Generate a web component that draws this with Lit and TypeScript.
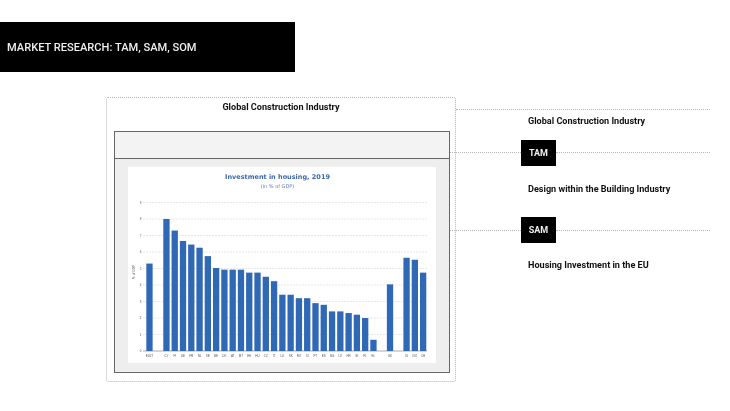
import { LitElement, html, css, svg } from "lit";
import { customElement } from "lit/decorators.js";

const VALUES: [string, number, number][] = [
  ["EU27", 5.3, -2.05], ["CY", 8, 0], ["FI", 7.3, 1], ["DE", 6.67, 2], ["FR", 6.45, 3], ["NL", 6.26, 4],
  ["SE", 5.75, 5], ["BE", 5.03, 6], ["DK", 4.93, 7], ["AT", 4.93, 8], ["MT", 4.93, 9], ["EE", 4.75, 10],
  ["HU", 4.75, 11], ["CZ", 4.5, 12], ["IT", 4.23, 13], ["LU", 3.41, 14], ["SK", 3.41, 15], ["RO", 3.2, 16],
  ["SI", 3.2, 17], ["PT", 2.9, 18], ["ES", 2.8, 19], ["BG", 2.4, 20], ["LV", 2.4, 21], ["HR", 2.3, 22],
  ["IE", 2.2, 23], ["PL", 2.0, 24], ["EL", 0.68, 25], ["UK", 4.04, 27], ["IS", 5.65, 29], ["NO", 5.53, 30], ["CH", 4.75, 31],
];
const Y0 = 184;
const STEP = 16.5;
const PITCH = 8.28;
const X0 = 35.3;

@customElement("app-root")
export class AppRoot extends LitElement {
  static styles = css`
    :host { display: block; width: 730px; height: 411px; background: #fff; font-family: Roboto, "Liberation Sans", sans-serif; color: #111; overflow: hidden; }
    .page { padding-top: 22px; filter: blur(0.25px); }
    .banner { width: 295px; height: 50px; box-sizing: border-box; background: #000; color: #eee; display: flex; align-items: center; padding-left: 7px; font-size: 11.1px; font-weight: 500; }
    .stage { display: flex; margin-top: 25px; padding-left: 106px; align-items: flex-start; }
    .outer { width: 350px; height: 285px; box-sizing: border-box; border: 1px dotted #b5b5b5; border-radius: 2px; flex: none; display: flex; flex-direction: column; }
    .outer h2 { margin: 0; height: 33px; box-sizing: border-box; padding-top: 3px; text-align: center; font-size: 9.1px; line-height: 12px; font-weight: 700; }
    .inner { margin-left: 7px; width: 336px; height: 242px; box-sizing: border-box; border: 1px solid #666; background: #eee; display: flex; flex-direction: column; }
    .band { height: 26px; flex: none; background: #f3f3f3; border-bottom: 1px solid #666; }
    .shot { margin: 8px 0 0 13px; width: 308px; height: 196px; background: #fff; filter: blur(0.3px); }
    .shot svg { display: block; }
    .side { flex: none; width: 254px; display: flex; flex-direction: column; margin-top: 12px; }
    .rule { border-top: 1px dotted #b5b5b5; height: 0; }
    .caption { margin: 0; padding-left: 72px; font-size: 9.1px; line-height: 12px; font-weight: 700; }
    .tagrow { display: flex; align-items: center; margin-left: -6px; height: 26px; }
    .lead { width: 71px; flex: none; }
    .tag { width: 35px; height: 26px; background: #000; color: #eee; font-size: 9px; font-weight: 700; display: flex; align-items: center; justify-content: center; flex: none; }
    .trail { flex: 1; }
    .first { margin-top: 5px; }
    .tagrow.tam { margin-top: 13px; }
    .tagrow.tam .rule { margin-bottom: 2px; }
    .cap2 { margin-top: 17px; }
    .tagrow.sam { margin-top: 22px; }
    .cap3 { margin-top: 16px; }
    .title { font: 700 6.5px "DejaVu Sans", sans-serif; fill: #3d68ad; }
    .sub { font: 400 5px "DejaVu Sans", sans-serif; fill: #5f7fb8; }
    .tick { font: 400 3px "Liberation Sans", sans-serif; fill: #555; }
    .ylab { font: 400 3.2px "Liberation Sans", sans-serif; fill: #555; }
    .grid { stroke: #ddd; stroke-width: 0.7; stroke-dasharray: 2 1; }
    .axis { stroke: #888; stroke-width: 0.7; }
    .bar { fill: #2f68b4; }
  `;

  private chart() {
    const grid = [1, 2, 3, 4, 5, 6, 7, 8, 9];
    return html`<svg width="308" height="196" viewBox="0 0 308 196">
      <text class="title" x="149.5" y="12" text-anchor="middle">Investment in housing, 2019</text>
      <text class="sub" x="149.5" y="21" text-anchor="middle">(in % of GDP)</text>
      ${grid.map((g) => svg`<line class="grid" x1="15" x2="299" y1=${Y0 - g * STEP} y2=${Y0 - g * STEP}></line>`)}
      ${[0, ...grid].map((g) => svg`<text class="tick" x="12.7" y=${Y0 - g * STEP + 1} text-anchor="middle">${g}</text>`)}
      <text class="ylab" transform="translate(7 105) rotate(-90)" text-anchor="middle">% of GDP</text>
      <line class="axis" x1="15" x2="299" y1=${Y0} y2=${Y0}></line>
      ${VALUES.map(([name, v, i]) => {
        const x = X0 + i * PITCH;
        return svg`<rect class="bar" x=${x} y=${Y0 - v * STEP} width="6.3" height=${v * STEP}></rect>
          <text class="tick" x=${x + 3.15} y="189.5" text-anchor="middle">${name}</text>`;
      })}
    </svg>`;
  }

  render() {
    return html`<div class="page">
      <div class="banner">MARKET RESEARCH: TAM, SAM, SOM</div>
      <div class="stage">
        <div class="outer">
          <h2>Global Construction Industry</h2>
          <div class="inner">
            <div class="band"></div>
            <div class="shot">${this.chart()}</div>
          </div>
        </div>
        <div class="side">
          <div class="rule"></div>
          <p class="caption first">Global Construction Industry</p>
          <div class="tagrow tam"><span class="lead rule"></span><span class="tag">TAM</span><span class="trail rule"></span></div>
          <p class="caption cap2">Design within the Building Industry</p>
          <div class="tagrow sam"><span class="lead rule"></span><span class="tag">SAM</span><span class="trail rule"></span></div>
          <p class="caption cap3">Housing Investment in the EU</p>
        </div>
      </div>
    </div>`;
  }
}
